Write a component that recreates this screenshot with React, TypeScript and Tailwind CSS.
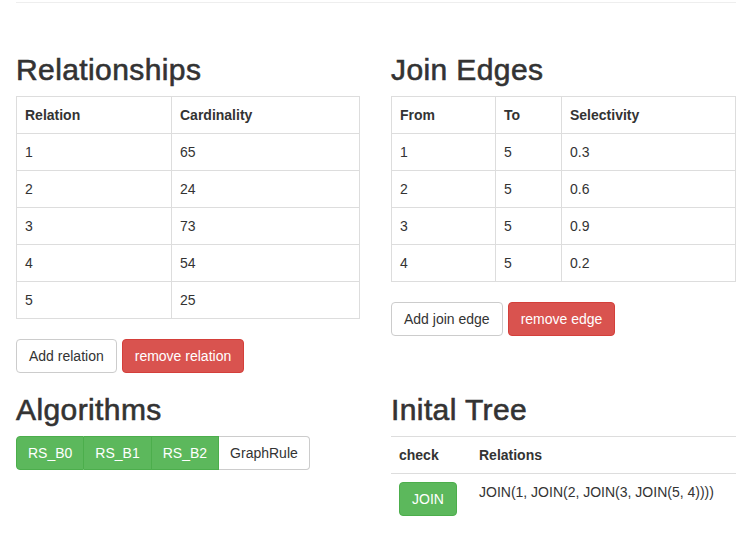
import * as React from "react";

const relations = [
  ["1", "65"],
  ["2", "24"],
  ["3", "73"],
  ["4", "54"],
  ["5", "25"],
];

const edges = [
  ["1", "5", "0.3"],
  ["2", "5", "0.6"],
  ["3", "5", "0.9"],
  ["4", "5", "0.2"],
];

const th = "border border-[#ddd] px-2 py-2 text-left font-bold leading-5";
const td = "border border-[#ddd] px-2 py-2 leading-5";
const btn = "inline-block rounded px-3 py-[6px] text-sm leading-5 border";
const btnDefault = btn + " bg-white border-[#ccc] text-[#333]";
const btnDanger = btn + " bg-[#d9534f] border-[#d43f3a] text-white";
const grp = "px-[11px] py-[6px] leading-5 border";

function Heading({ children }: { children: React.ReactNode }) {
  return (
    <h2 className="mt-5 mb-[10px] text-[30px] leading-[33px] font-medium tracking-[0.4px] text-[#333] [-webkit-text-stroke:0.6px_#333]">
      {children}
    </h2>
  );
}

export default function App() {
  return (
    <div
      className="bg-white text-sm text-[#333] w-[752px] h-[540px] overflow-hidden"
      style={{ fontFamily: '"Liberation Sans", Arial, sans-serif' }}
    >
      <div className="px-4 pt-[2px]">
        <hr className="border-t border-[#eee]" />
        <div className="h-[30px]" />
        <div className="grid grid-cols-[344px_345px] gap-x-[31px]">
          <div>
            <Heading>Relationships</Heading>
            <table className="w-full border-collapse">
              <thead>
                <tr>
                  <th className={th + " w-[155px]"}>Relation</th>
                  <th className={th}>Cardinality</th>
                </tr>
              </thead>
              <tbody>
                {relations.map((r) => (
                  <tr key={r[0]}>
                    <td className={td}>{r[0]}</td>
                    <td className={td}>{r[1]}</td>
                  </tr>
                ))}
              </tbody>
            </table>
            <div className="mt-5 flex gap-[5px]">
              <button className={btnDefault}>Add relation</button>
              <button className={btnDanger}>remove relation</button>
            </div>
          </div>
          <div>
            <Heading>Join Edges</Heading>
            <table className="w-full border-collapse">
              <thead>
                <tr>
                  <th className={th + " w-[104px]"}>From</th>
                  <th className={th + " w-[66px]"}>To</th>
                  <th className={th}>Selectivity</th>
                </tr>
              </thead>
              <tbody>
                {edges.map((e) => (
                  <tr key={e[0]}>
                    <td className={td}>{e[0]}</td>
                    <td className={td}>{e[1]}</td>
                    <td className={td}>{e[2]}</td>
                  </tr>
                ))}
              </tbody>
            </table>
            <div className="mt-5 flex gap-[5px]">
              <button className={btnDefault}>Add join edge</button>
              <button className={btnDanger}>remove edge</button>
            </div>
          </div>
          <div>
            <Heading>Algorithms</Heading>
            <div className="flex">
              <button className={grp + " border-[#4cae4c] bg-[#5cb85c] text-white rounded-l"}>
                RS_B0
              </button>
              <button className={grp + " border-[#4cae4c] border-l-0 bg-[#5cb85c] text-white"}>
                RS_B1
              </button>
              <button className={grp + " border-[#4cae4c] border-l-0 bg-[#5cb85c] text-white"}>
                RS_B2
              </button>
              <button className={grp + " border-[#ccc] border-l-0 bg-white text-[#333] rounded-r"}>
                GraphRule
              </button>
            </div>
          </div>
          <div>
            <Heading>Inital Tree</Heading>
            <table className="w-full border-collapse">
              <thead>
                <tr>
                  <th className="border-t border-b border-[#ddd] px-2 py-2 text-left font-bold leading-5 w-[80px]">
                    check
                  </th>
                  <th className="border-t border-b border-[#ddd] px-2 py-2 text-left font-bold leading-5">
                    Relations
                  </th>
                </tr>
              </thead>
              <tbody>
                <tr>
                  <td className="px-2 py-2 align-top">
                    <button className="rounded px-3 py-[6px] leading-5 border border-[#4cae4c] bg-[#5cb85c] text-white">
                      JOIN
                    </button>
                  </td>
                  <td className="px-2 py-2 align-top leading-5">
                    JOIN(1, JOIN(2, JOIN(3, JOIN(5, 4))))
                  </td>
                </tr>
              </tbody>
            </table>
          </div>
        </div>
      </div>
    </div>
  );
}
